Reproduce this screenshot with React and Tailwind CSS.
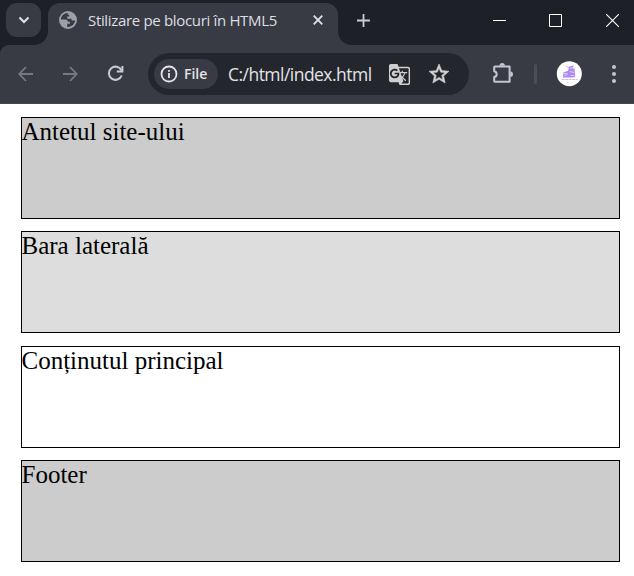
import React from "react";
import { MdGTranslate, MdStarOutline } from "react-icons/md";

function GlobeIcon() {
  return (
    <svg className="ml-[11px] mt-[8px] shrink-0" width="18" height="18" viewBox="0 0 18 18">
      <circle cx="9" cy="9" r="9" fill="#9b9fa8" />
      <path d="M8.800 1.900C4.800 2 2 5 1.900 8.400h4.300c1.600 0 2.600.8 2.600 2.300h2.100v2H8.200v3.200c4 .5 7.600-2.400 7.900-6.300h-1.800c-1.300 0-2-.7-2-1.900H8.200V5.400h2V3.700H8.800z" fill="#393b44" />
    </svg>
  );
}

function TabStrip() {
  return (
    <div className="flex h-[45px] bg-[#1d2027]">
      <button className="ml-[6px] mt-[3px] flex h-[34px] w-[35px] shrink-0 items-center justify-center rounded-[11px] bg-[#393b44]">
        <svg width="12" height="8" viewBox="0 0 12 8" fill="none" stroke="#e3e3e6" strokeWidth="2">
          <path d="M1.5 1.5 6 6l4.500-4.500" />
        </svg>
      </button>
      <div className="relative ml-[7px] mt-[3px] flex h-[42px] w-[290px] shrink-0 rounded-t-[12px] bg-[#393b44]">
        <svg className="absolute -left-[14px] bottom-0" width="14" height="14" viewBox="0 0 14 14" fill="#393b44">
          <path d="M14 0v14H0A14 14 0 0 0 14 0z" />
        </svg>
        <svg className="absolute -right-[14px] bottom-0" width="14" height="14" viewBox="0 0 14 14" fill="#393b44">
          <path d="M0 0v14h14A14 14 0 0 1 0 0z" />
        </svg>
        <GlobeIcon />
        <span className="ml-[11px] mt-[7px] w-[213px] whitespace-nowrap font-['Open_Sans',sans-serif] text-[15px] leading-[20px] tracking-[-0.33px] text-[#dddee2]">
          Stilizare pe blocuri în HTML5
        </span>
        <svg className="ml-[12px] mt-[12px] shrink-0" width="10" height="10" viewBox="0 0 10 10" stroke="#e3e3e6" strokeWidth="1.800">
          <path d="M.7.7l8.600 8.600M9.300.7.7 9.300" />
        </svg>
      </div>
      <svg className="ml-[19px] mt-[14px] shrink-0" width="13" height="13" viewBox="0 0 13 13" stroke="#c9ccd6" strokeWidth="1.800">
        <path d="M6.500 0v13M0 6.500h13" />
      </svg>
      <div className="ml-auto mr-[15px] mt-[14px] flex h-[13px]">
        <svg width="13" height="13" viewBox="0 0 13 13" stroke="#fff">
          <path d="M0 6.500h13" />
        </svg>
        <svg className="ml-[43px]" width="13" height="13" viewBox="0 0 13 13" fill="none" stroke="#fff">
          <path d="M.5.5h12v12H.5z" />
        </svg>
        <svg className="ml-[44px]" width="13" height="13" viewBox="0 0 13 13" stroke="#fff" strokeWidth="1.100">
          <path d="M0 0l13 13M13 0 0 13" />
        </svg>
      </div>
    </div>
  );
}

function Toolbar() {
  return (
    <div className="flex h-[59px] bg-[#1d2027]">
      <div className="flex h-[59px] w-full rounded-tl-[9px] border-b border-[#45454b] bg-[#393b44]">
        <svg className="ml-[17px] mt-[21px] shrink-0" width="16" height="16" viewBox="0 0 16 16" fill="none" stroke="#77797f" strokeWidth="1.800">
          <path d="M16 8H2.500M9 1 2.300 8 9 15" />
        </svg>
        <svg className="ml-[29px] mt-[21px] shrink-0" width="16" height="16" viewBox="0 0 16 16" fill="none" stroke="#77797f" strokeWidth="1.800">
          <path d="M1 8h13.500M8 1l6.700 7L8 15" />
        </svg>
        <svg className="ml-[29px] mt-[20px] shrink-0" width="17" height="17" viewBox="0 0 17 17" fill="none" stroke="#c9ccd8" strokeWidth="2">
          <path d="M14.700 10.500A6.600 6.600 0 1 1 14.500 5.500" />
          <path d="M15.400 1v5.600H9.800" />
        </svg>
        <div className="ml-[24px] mt-[8px] flex h-[42px] w-[321px] shrink-0 rounded-full bg-[#24262e]">
          <div className="ml-[6px] mt-[6px] flex h-[30px] w-[64px] shrink-0 items-center rounded-full bg-[#393b44]">
            <svg className="ml-[6px]" width="18" height="18" viewBox="0 0 18 18" fill="none" stroke="#e3e3e6" strokeWidth="1.800">
              <circle cx="9" cy="9" r="7.500" />
              <path d="M9 8v5M9 5v1.800" />
            </svg>
            <span className="ml-[6px] font-['Open_Sans',sans-serif] text-[14px] font-semibold leading-[20px] text-[#e3e3e6]">File</span>
          </div>
          <span className="ml-[10px] mt-[9px] w-[150px] whitespace-nowrap font-['Open_Sans',sans-serif] text-[17.5px] leading-[24px] tracking-[-0.53px] text-[#e3e3e6]">
            C:/html/index.html
          </span>
          <MdGTranslate className="ml-[10px] mt-[10px] shrink-0 text-[#cfcfcf]" size={23} />
          <MdStarOutline className="ml-[16px] mt-[9px] shrink-0 stroke-[0.6px] text-[#d2d0d0]" size={24} />
        </div>
        <svg className="ml-[23px] mt-[17px] shrink-0" width="23" height="23" viewBox="0 0 23 23" fill="none" stroke="#c3c7d3" strokeWidth="2" strokeLinejoin="round">
          <path d="M3 4.500h14.600v15.200H3a.8.8 0 0 1-.8-.8v-3.800a3 3 0 0 0 0-5.900V5.300A.8.8 0 0 1 3 4.500z" />
          <path d="M7.500 3.800a2.700 2.700 0 0 1 5.400 0zM18.300 9.600a2.700 2.700 0 0 1 0 5.400z" fill="#c3c7d3" stroke="none" />
        </svg>
        <div className="ml-[19px] mt-[19px] h-[20px] w-[3px] shrink-0 rounded bg-[#4b4d57]" />
        <svg className="ml-[19px] mt-[16px] shrink-0" width="26" height="26" viewBox="0 0 26 26">
          <circle cx="13.300" cy="12.700" r="12.500" fill="#fff" />
          <g fill="#a174ef" opacity=".85">
            <path d="M8.500 5.500l4.500.2 5-1.500-1.500 3h2l.8 8.800-3 .5H7l.3-5 4.700-1.700 1-3z" />
          </g>
          <path d="M7.500 12.500h4m2-2 5 1m-10 3 3-1m3 1h4M14 7.500l3-1" stroke="#ddccfa" fill="none" />
          <path d="M5.500 18.500h16" stroke="#cdbdf2" strokeDasharray="3 .6" />
        </svg>
        <svg className="ml-[30px] mt-[20px] shrink-0" width="4" height="18" viewBox="0 0 4 18" fill="#c3c7d3">
          <circle cx="2" cy="2" r="2" />
          <circle cx="2" cy="9" r="2" />
          <circle cx="2" cy="16" r="2" />
        </svg>
      </div>
    </div>
  );
}

export default function App() {
  return (
    <div className="flex h-[576px] w-[634px] flex-col overflow-hidden bg-white">
      <TabStrip />
      <Toolbar />
      <main className="flex flex-col pl-[21px] pr-[14px] pt-[13px] indent-[-0.5px] font-['Liberation_Serif',serif] text-[25px] leading-[28px] text-black">
        <header className="h-[102px] border border-black bg-[#ccc]">Antetul site-ului</header>
        <aside className="mt-[12px] h-[102px] border border-black bg-[#ddd]">Bara laterală</aside>
        <section className="mt-[13px] h-[102px] border border-black bg-white">Conținutul principal</section>
        <footer className="mt-[12px] h-[102px] border border-black bg-[#ccc]">Footer</footer>
      </main>
    </div>
  );
}
